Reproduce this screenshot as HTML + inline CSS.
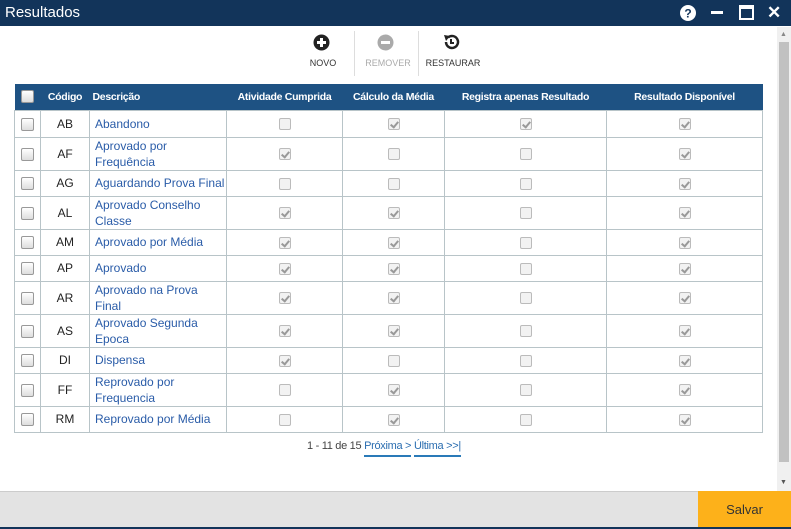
<!DOCTYPE html>
<html><head><meta charset="utf-8"><style>
*{margin:0;padding:0;box-sizing:border-box}
body{width:791px;height:529px;overflow:hidden;background:#fff;font-family:"Liberation Sans",sans-serif;position:relative}
.title{position:absolute;left:0;top:0;width:791px;height:26px;background:#12345a;color:#fff;font-size:15px;line-height:26px;padding-left:5px}
.sb{position:absolute;left:777px;top:27px;width:14px;height:464px;background:#f0f0f0}
.sb .th{position:absolute;left:2px;top:15px;width:10px;height:420px;background:#c1c1c1}
.foot{position:absolute;left:0;top:491px;width:791px;height:36px;background:#e3e3e3;border-top:1px solid #ccc}
.save{position:absolute;left:698px;top:491px;width:93px;height:36px;background:#fdb11a;color:#333;font-size:13px;text-align:center;line-height:38px}
.bl{position:absolute;left:0;top:527px;width:791px;height:2px;background:#12345a}
.tb{position:absolute;top:58px;font-size:9px;color:#333;text-align:center}
table{position:absolute;left:14px;top:84px;width:749px;border-collapse:collapse;font-size:12px}
th{background:#1e5283;color:#fff;font-size:10.5px;letter-spacing:-0.3px;font-weight:bold;height:26px;border:none}
td{border:1px solid #b8c4c8;text-align:center;color:#222}
td.d{text-align:left;color:#2a5ca8;padding-left:5px;line-height:16px}
.cb{display:inline-block;width:12px;height:12px;border:1px solid #bbb;border-radius:2px;background:#f2f2f2;vertical-align:middle;position:relative}
.cb.c::after{content:"";position:absolute;left:3px;top:1px;width:3px;height:6px;border:solid #999;border-width:0 2px 2px 0;transform:rotate(40deg)}
.rc{display:inline-block;width:13px;height:13px;border:1px solid #999;border-radius:2px;background:linear-gradient(#fff,#ddd);vertical-align:middle}
</style></head><body>
<div class="title">Resultados
<svg style="position:absolute;left:680px;top:5px" width="16" height="16"><circle cx="8" cy="8" r="8" fill="#fff"/><text x="8" y="12.5" font-size="12" font-weight="bold" text-anchor="middle" fill="#12345a" font-family="Liberation Sans">?</text></svg>
<div style="position:absolute;left:711px;top:11px;width:12px;height:3px;background:#fff"></div>
<div style="position:absolute;left:739px;top:5px;width:15px;height:15px;border:2px solid #fff;border-top-width:4px"></div>
<div style="position:absolute;left:767px;top:0;color:#fff;font-size:17px;font-weight:bold">✕</div>
</div>
<svg style="position:absolute;left:313px;top:34px" width="17" height="17"><circle cx="8.5" cy="8.5" r="8" fill="#222"/><rect x="7" y="4" width="3" height="9" fill="#fff"/><rect x="4" y="7" width="9" height="3" fill="#fff"/></svg>
<div class="tb" style="left:308px;width:30px">NOVO</div>
<div style="position:absolute;left:354px;top:31px;width:1px;height:45px;background:#ddd"></div>
<svg style="position:absolute;left:377px;top:34px" width="17" height="17"><circle cx="8.5" cy="8.5" r="8" fill="#aaa"/><rect x="4" y="7" width="9" height="3" fill="#fff"/></svg>
<div class="tb" style="left:364px;width:48px;color:#aaa">REMOVER</div>
<div style="position:absolute;left:418px;top:31px;width:1px;height:45px;background:#ddd"></div>
<svg style="position:absolute;left:442px;top:33px" width="18" height="18"><path d="M4 9 A6 6 0 1 0 6 4.5" fill="none" stroke="#222" stroke-width="2.5"/><path d="M2 2 L8 3 L4 8Z" fill="#222"/><path d="M9 6 V10 H12" fill="none" stroke="#222" stroke-width="2"/></svg>
<div class="tb" style="left:424px;width:58px">RESTAURAR</div>
<table>
<tr><th style="width:26px"><span class="rc"></span></th><th style="width:49px">Código</th><th style="width:137px;text-align:left;padding-left:3px">Descrição</th><th style="width:116px">Atividade Cumprida</th><th style="width:102px">Cálculo da Média</th><th style="width:162px">Registra apenas Resultado</th><th>Resultado Disponível</th></tr>
<tr style="height:27px"><td><span class="rc"></span></td><td>AB</td><td class="d">Abandono</td><td><span class="cb"></span></td><td><span class="cb c"></span></td><td><span class="cb c"></span></td><td><span class="cb c"></span></td></tr>
<tr style="height:33px"><td><span class="rc"></span></td><td>AF</td><td class="d">Aprovado por<br>Frequência</td><td><span class="cb c"></span></td><td><span class="cb"></span></td><td><span class="cb"></span></td><td><span class="cb c"></span></td></tr>
<tr style="height:26px"><td><span class="rc"></span></td><td>AG</td><td class="d">Aguardando Prova Final</td><td><span class="cb"></span></td><td><span class="cb"></span></td><td><span class="cb"></span></td><td><span class="cb c"></span></td></tr>
<tr style="height:33px"><td><span class="rc"></span></td><td>AL</td><td class="d">Aprovado Conselho<br>Classe</td><td><span class="cb c"></span></td><td><span class="cb c"></span></td><td><span class="cb"></span></td><td><span class="cb c"></span></td></tr>
<tr style="height:26px"><td><span class="rc"></span></td><td>AM</td><td class="d">Aprovado por Média</td><td><span class="cb c"></span></td><td><span class="cb c"></span></td><td><span class="cb"></span></td><td><span class="cb c"></span></td></tr>
<tr style="height:26px"><td><span class="rc"></span></td><td>AP</td><td class="d">Aprovado</td><td><span class="cb c"></span></td><td><span class="cb c"></span></td><td><span class="cb"></span></td><td><span class="cb c"></span></td></tr>
<tr style="height:33px"><td><span class="rc"></span></td><td>AR</td><td class="d">Aprovado na Prova<br>Final</td><td><span class="cb c"></span></td><td><span class="cb c"></span></td><td><span class="cb"></span></td><td><span class="cb c"></span></td></tr>
<tr style="height:32px"><td><span class="rc"></span></td><td>AS</td><td class="d">Aprovado Segunda<br>Epoca</td><td><span class="cb c"></span></td><td><span class="cb c"></span></td><td><span class="cb"></span></td><td><span class="cb c"></span></td></tr>
<tr style="height:26px"><td><span class="rc"></span></td><td>DI</td><td class="d">Dispensa</td><td><span class="cb c"></span></td><td><span class="cb"></span></td><td><span class="cb"></span></td><td><span class="cb c"></span></td></tr>
<tr style="height:33px"><td><span class="rc"></span></td><td>FF</td><td class="d">Reprovado por<br>Frequencia</td><td><span class="cb"></span></td><td><span class="cb c"></span></td><td><span class="cb"></span></td><td><span class="cb c"></span></td></tr>
<tr style="height:26px"><td><span class="rc"></span></td><td>RM</td><td class="d">Reprovado por Média</td><td><span class="cb"></span></td><td><span class="cb c"></span></td><td><span class="cb"></span></td><td><span class="cb c"></span></td></tr>
</table>
<div style="position:absolute;left:307px;top:440px;font-size:11px;color:#444;letter-spacing:-0.3px">1 - 11 de 15 <span style="color:#2a6db0;border-bottom:2px solid #2a7ab8;padding-bottom:3px">Próxima &gt;</span> <span style="color:#2a6db0;border-bottom:2px solid #2a7ab8;padding-bottom:3px">Última &gt;&gt;|</span></div>
<div class="sb"><div class="th"></div><div style="position:absolute;left:3px;top:4px;font-size:7px;color:#888">▲</div><div style="position:absolute;left:3px;top:452px;font-size:7px;color:#555">▼</div></div>
<div class="foot"></div><div class="save">Salvar</div><div class="bl"></div>
</body></html>
